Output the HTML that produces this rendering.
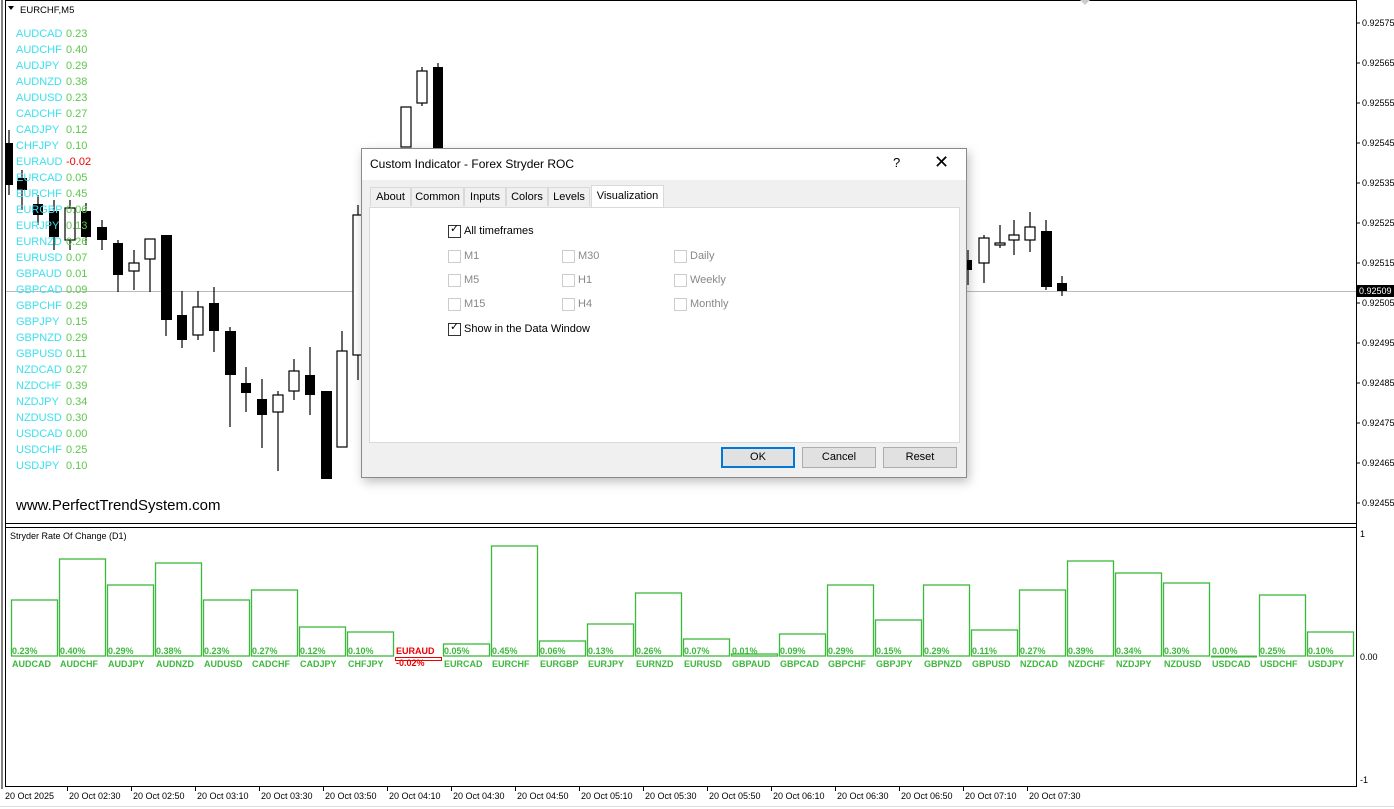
<!DOCTYPE html>
<html><head><meta charset="utf-8"><style>
body{margin:0;width:1394px;height:809px;background:#fff;overflow:hidden;position:relative;font-family:"Liberation Sans",sans-serif}
.lab{position:absolute;font-size:11px;line-height:16px}
.dlg{position:absolute;left:361px;top:148px;width:604px;height:328px;background:#f0f0f0;border:1px solid #8a8a8a;box-shadow:2px 4px 10px rgba(0,0,0,.25);font-size:11px;color:#000}
.tb{position:absolute;left:0;top:0;right:0;height:31px;background:#fff}
.tab{position:absolute;top:38px;height:19px;line-height:19px;border:1px solid #d9d9d9;border-bottom:none;background:#f0f0f0;text-align:center;font-size:11px;box-sizing:border-box}
.panel{position:absolute;left:7px;top:58px;width:589px;height:234px;background:#fff;border:1px solid #d9d9d9}
.cb{position:absolute;width:11px;height:11px;border:1px solid #333;background:#fff}
.cb.d{border-color:#ccc}
.ct{position:absolute;font-size:11px}
.btn{position:absolute;top:298px;height:19px;line-height:19px;width:72px;text-align:center;background:#e1e1e1;border:1px solid #adadad;font-size:11px}
</style></head><body>
<svg width="1394" height="809" style="position:absolute;left:0;top:0" font-family="Liberation Sans,sans-serif">
<g stroke="#000" fill="none">
<line x1="2" y1="0" x2="2" y2="789"/><line x1="5.5" y1="0" x2="5.5" y2="787"/>
<line x1="5" y1="0.5" x2="1356" y2="0.5"/>
<line x1="1356.5" y1="0" x2="1356.5" y2="787"/>
<line x1="5" y1="523.5" x2="1356" y2="523.5"/>
<line x1="5" y1="527.5" x2="1356" y2="527.5"/>
<line x1="5" y1="786.5" x2="1356" y2="786.5"/>
</g>
<line x1="6" y1="291.5" x2="1356" y2="291.5" stroke="#bbb"/>
<rect x="1357" y="285" width="37" height="12" fill="#000"/>
<text x="1359" y="294" font-size="9" fill="#fff">0.92509</text>
<g font-size="9" fill="#000">
<text x="1362" y="26">0.92575</text><text x="1362" y="66">0.92565</text><text x="1362" y="106">0.92555</text><text x="1362" y="146">0.92545</text><text x="1362" y="186">0.92535</text><text x="1362" y="226">0.92525</text><text x="1362" y="266">0.92515</text><text x="1362" y="306">0.92505</text><text x="1362" y="346">0.92495</text><text x="1362" y="386">0.92485</text><text x="1362" y="426">0.92475</text><text x="1362" y="466">0.92465</text><text x="1362" y="506">0.92455</text>
<text x="1360" y="537">1</text><text x="1360" y="660">0.00</text><text x="1360" y="783">-1</text>
</g>
<g stroke="#000" stroke-width="1">
<line x1="1356" y1="23" x2="1360" y2="23"/><line x1="1356" y1="63" x2="1360" y2="63"/><line x1="1356" y1="103" x2="1360" y2="103"/><line x1="1356" y1="143" x2="1360" y2="143"/><line x1="1356" y1="183" x2="1360" y2="183"/><line x1="1356" y1="223" x2="1360" y2="223"/><line x1="1356" y1="263" x2="1360" y2="263"/><line x1="1356" y1="303" x2="1360" y2="303"/><line x1="1356" y1="343" x2="1360" y2="343"/><line x1="1356" y1="383" x2="1360" y2="383"/><line x1="1356" y1="423" x2="1360" y2="423"/><line x1="1356" y1="463" x2="1360" y2="463"/><line x1="1356" y1="503" x2="1360" y2="503"/>
</g>
<path d="M8 6 L14 6 L11 10 Z" fill="#000"/>
<text x="20" y="13" font-size="9.5" fill="#000">EURCHF,M5</text>
<path d="M1080 0 L1090 0 L1085 5 Z" fill="#ccc"/>
<g stroke="#000" stroke-width="1.2">
<line x1="9" y1="130" x2="9" y2="195"/><line x1="22" y1="170" x2="22" y2="210"/><line x1="38" y1="195" x2="38" y2="225"/><line x1="54" y1="200" x2="54" y2="250"/><line x1="70" y1="200" x2="70" y2="250"/><line x1="86" y1="203" x2="86" y2="245"/><line x1="102" y1="220" x2="102" y2="250"/><line x1="118" y1="240" x2="118" y2="292"/><line x1="134" y1="250" x2="134" y2="290"/><line x1="150" y1="239" x2="150" y2="292"/>
<line x1="166" y1="235" x2="166" y2="336"/><line x1="182" y1="291" x2="182" y2="348"/><line x1="198" y1="291" x2="198" y2="340"/><line x1="214" y1="287" x2="214" y2="352"/><line x1="230" y1="327" x2="230" y2="427"/><line x1="246" y1="367" x2="246" y2="412"/><line x1="262" y1="379" x2="262" y2="448"/><line x1="278" y1="391" x2="278" y2="471"/><line x1="294" y1="359" x2="294" y2="400"/><line x1="310" y1="347" x2="310" y2="415"/><line x1="342" y1="331" x2="342" y2="447"/><line x1="358" y1="205" x2="358" y2="380"/><line x1="422" y1="67" x2="422" y2="106"/><line x1="438" y1="63" x2="438" y2="150"/>
<line x1="968" y1="250" x2="968" y2="285"/><line x1="984" y1="235" x2="984" y2="283"/><line x1="1000" y1="225" x2="1000" y2="248"/><line x1="1014" y1="220" x2="1014" y2="255"/><line x1="1030" y1="212" x2="1030" y2="252"/><line x1="1046" y1="220" x2="1046" y2="290"/><line x1="1062" y1="276" x2="1062" y2="296"/>
</g>
<g fill="#000">
<rect x="5" y="143" width="8" height="42"/><rect x="17" y="178" width="10" height="12"/><rect x="33" y="204" width="10" height="11"/><rect x="49" y="211" width="10" height="26"/><rect x="81" y="211" width="10" height="26"/><rect x="97" y="227" width="10" height="13"/><rect x="113" y="243" width="10" height="32"/><rect x="161" y="235" width="11" height="85"/><rect x="177" y="315" width="10" height="25"/><rect x="209" y="303" width="10" height="28"/><rect x="225" y="331" width="11" height="44"/><rect x="241" y="383" width="10" height="10"/><rect x="257" y="399" width="10" height="16"/><rect x="305" y="375" width="10" height="20"/><rect x="321" y="391" width="11" height="88"/><rect x="433" y="67" width="10" height="83"/>
<rect x="963" y="260" width="9" height="10"/><rect x="1041" y="231" width="11" height="56"/><rect x="1057" y="283" width="10" height="8"/>
</g>
<g fill="#fff" stroke="#000" stroke-width="1.2">
<rect x="65" y="208" width="10" height="32"/><rect x="129" y="263" width="10" height="8"/><rect x="145" y="239" width="10" height="20"/><rect x="193" y="307" width="10" height="28"/><rect x="273" y="395" width="10" height="17"/><rect x="289" y="371" width="10" height="20"/><rect x="337" y="351" width="10" height="96"/><rect x="353" y="215" width="10" height="140"/><rect x="401" y="107" width="10" height="40"/><rect x="417" y="71" width="10" height="32"/>
<rect x="979" y="238" width="10" height="25"/><rect x="995" y="243" width="10" height="2"/><rect x="1009" y="235" width="10" height="5"/><rect x="1025" y="227" width="10" height="13"/>
</g>
<text x="16" y="510" font-size="15" fill="#000">www.PerfectTrendSystem.com</text>
<text x="10" y="539" font-size="9" fill="#000">Stryder Rate Of Change (D1)</text>
<g fill="none" stroke="#3cb83c" stroke-width="1.3">
<rect x="11.5" y="600" width="46" height="56"/><rect x="59.5" y="559" width="46" height="97"/><rect x="107.5" y="585" width="46" height="71"/><rect x="155.5" y="563" width="46" height="93"/><rect x="203.5" y="600" width="46" height="56"/><rect x="251.5" y="590" width="46" height="66"/><rect x="299.5" y="627" width="46" height="29"/><rect x="347.5" y="632" width="46" height="24"/><rect x="443.5" y="644" width="46" height="12"/><rect x="491.5" y="546" width="46" height="110"/><rect x="539.5" y="641" width="46" height="15"/><rect x="587.5" y="624" width="46" height="32"/><rect x="635.5" y="593" width="46" height="63"/><rect x="683.5" y="639" width="46" height="17"/><rect x="731.5" y="654" width="46" height="2"/><rect x="779.5" y="634" width="46" height="22"/><rect x="827.5" y="585" width="46" height="71"/><rect x="875.5" y="620" width="46" height="36"/><rect x="923.5" y="585" width="46" height="71"/><rect x="971.5" y="630" width="46" height="26"/><rect x="1019.5" y="590" width="46" height="66"/><rect x="1067.5" y="561" width="46" height="95"/><rect x="1115.5" y="573" width="46" height="83"/><rect x="1163.5" y="583" width="46" height="73"/><rect x="1259.5" y="595" width="46" height="61"/><rect x="1307.5" y="632" width="46" height="24"/>
</g>
<line x1="1211" y1="656.5" x2="1257" y2="656.5" stroke="#3cb83c" stroke-width="2"/>
<rect x="395.5" y="657.5" width="46" height="3" fill="none" stroke="#e00"/>
<g font-size="9" font-weight="bold" fill="#3cb83c">
<text x="12" y="654">0.23%</text><text x="60" y="654">0.40%</text><text x="108" y="654">0.29%</text><text x="156" y="654">0.38%</text><text x="204" y="654">0.23%</text><text x="252" y="654">0.27%</text><text x="300" y="654">0.12%</text><text x="348" y="654">0.10%</text><text x="444" y="654">0.05%</text><text x="492" y="654">0.45%</text><text x="540" y="654">0.06%</text><text x="588" y="654">0.13%</text><text x="636" y="654">0.26%</text><text x="684" y="654">0.07%</text><text x="732" y="654">0.01%</text><text x="780" y="654">0.09%</text><text x="828" y="654">0.29%</text><text x="876" y="654">0.15%</text><text x="924" y="654">0.29%</text><text x="972" y="654">0.11%</text><text x="1020" y="654">0.27%</text><text x="1068" y="654">0.39%</text><text x="1116" y="654">0.34%</text><text x="1164" y="654">0.30%</text><text x="1212" y="654">0.00%</text><text x="1260" y="654">0.25%</text><text x="1308" y="654">0.10%</text>
<text x="12" y="667">AUDCAD</text><text x="60" y="667">AUDCHF</text><text x="108" y="667">AUDJPY</text><text x="156" y="667">AUDNZD</text><text x="204" y="667">AUDUSD</text><text x="252" y="667">CADCHF</text><text x="300" y="667">CADJPY</text><text x="348" y="667">CHFJPY</text><text x="444" y="667">EURCAD</text><text x="492" y="667">EURCHF</text><text x="540" y="667">EURGBP</text><text x="588" y="667">EURJPY</text><text x="636" y="667">EURNZD</text><text x="684" y="667">EURUSD</text><text x="732" y="667">GBPAUD</text><text x="780" y="667">GBPCAD</text><text x="828" y="667">GBPCHF</text><text x="876" y="667">GBPJPY</text><text x="924" y="667">GBPNZD</text><text x="972" y="667">GBPUSD</text><text x="1020" y="667">NZDCAD</text><text x="1068" y="667">NZDCHF</text><text x="1116" y="667">NZDJPY</text><text x="1164" y="667">NZDUSD</text><text x="1212" y="667">USDCAD</text><text x="1260" y="667">USDCHF</text><text x="1308" y="667">USDJPY</text>
</g>
<g font-size="9" font-weight="bold" fill="#e00"><text x="396" y="654">EURAUD</text><text x="396" y="666">-0.02%</text></g>
<g font-size="9" fill="#000">
<text x="5" y="799">20 Oct 2025</text><text x="69" y="799">20 Oct 02:30</text><text x="133" y="799">20 Oct 02:50</text><text x="197" y="799">20 Oct 03:10</text><text x="261" y="799">20 Oct 03:30</text><text x="325" y="799">20 Oct 03:50</text><text x="389" y="799">20 Oct 04:10</text><text x="453" y="799">20 Oct 04:30</text><text x="517" y="799">20 Oct 04:50</text><text x="581" y="799">20 Oct 05:10</text><text x="645" y="799">20 Oct 05:30</text><text x="709" y="799">20 Oct 05:50</text><text x="773" y="799">20 Oct 06:10</text><text x="837" y="799">20 Oct 06:30</text><text x="901" y="799">20 Oct 06:50</text><text x="965" y="799">20 Oct 07:10</text><text x="1029" y="799">20 Oct 07:30</text>
</g>
<g stroke="#000"><line x1="67.5" y1="786" x2="67.5" y2="791"/><line x1="131.5" y1="786" x2="131.5" y2="791"/><line x1="195.5" y1="786" x2="195.5" y2="791"/><line x1="259.5" y1="786" x2="259.5" y2="791"/><line x1="323.5" y1="786" x2="323.5" y2="791"/><line x1="387.5" y1="786" x2="387.5" y2="791"/><line x1="451.5" y1="786" x2="451.5" y2="791"/><line x1="515.5" y1="786" x2="515.5" y2="791"/><line x1="579.5" y1="786" x2="579.5" y2="791"/><line x1="643.5" y1="786" x2="643.5" y2="791"/><line x1="707.5" y1="786" x2="707.5" y2="791"/><line x1="771.5" y1="786" x2="771.5" y2="791"/><line x1="835.5" y1="786" x2="835.5" y2="791"/><line x1="899.5" y1="786" x2="899.5" y2="791"/><line x1="963.5" y1="786" x2="963.5" y2="791"/><line x1="1027.5" y1="786" x2="1027.5" y2="791"/></g>
<line x1="0" y1="806.5" x2="1394" y2="806.5" stroke="#ddd"/>
</svg>
<div class="lab" style="left:16px;top:26px;color:#3ce0ee">AUDCAD<br>AUDCHF<br>AUDJPY<br>AUDNZD<br>AUDUSD<br>CADCHF<br>CADJPY<br>CHFJPY<br>EURAUD<br>EURCAD<br>EURCHF<br>EURGBP<br>EURJPY<br>EURNZD<br>EURUSD<br>GBPAUD<br>GBPCAD<br>GBPCHF<br>GBPJPY<br>GBPNZD<br>GBPUSD<br>NZDCAD<br>NZDCHF<br>NZDJPY<br>NZDUSD<br>USDCAD<br>USDCHF<br>USDJPY</div>
<div class="lab" style="left:66px;top:26px;color:#5cc84a">0.23<br>0.40<br>0.29<br>0.38<br>0.23<br>0.27<br>0.12<br>0.10<br><span style="color:#e00">-0.02</span><br>0.05<br>0.45<br>0.06<br>0.13<br>0.26<br>0.07<br>0.01<br>0.09<br>0.29<br>0.15<br>0.29<br>0.11<br>0.27<br>0.39<br>0.34<br>0.30<br>0.00<br>0.25<br>0.10</div>
<div class="dlg">
<div class="tb"><span style="position:absolute;left:8px;top:8px;font-size:12px">Custom Indicator - Forex Stryder ROC</span><span style="position:absolute;left:531px;top:6px;font-size:13px">?</span><span style="position:absolute;left:572px;top:3px;font-size:18px;font-weight:300">✕</span></div>
<div class="tab" style="left:8px;width:41px">About</div>
<div class="tab" style="left:49px;width:53px">Common</div>
<div class="tab" style="left:102px;width:42px">Inputs</div>
<div class="tab" style="left:144px;width:42px">Colors</div>
<div class="tab" style="left:186px;width:42px">Levels</div>
<div class="tab" style="left:229px;top:36px;height:22px;line-height:20px;width:73px;background:#fff;z-index:2">Visualization</div>
<div class="panel">
<div class="cb" style="left:78px;top:17px"></div><span class="ct" style="left:80px;top:14px">✓</span><span class="ct" style="left:94px;top:17px">All timeframes</span>
<div class="cb d" style="left:78px;top:42px"></div><span class="ct" style="left:94px;top:42px;color:#888">M1</span>
<div class="cb d" style="left:78px;top:66px"></div><span class="ct" style="left:94px;top:66px;color:#888">M5</span>
<div class="cb d" style="left:78px;top:90px"></div><span class="ct" style="left:94px;top:90px;color:#888">M15</span>
<div class="cb d" style="left:192px;top:42px"></div><span class="ct" style="left:208px;top:42px;color:#888">M30</span>
<div class="cb d" style="left:192px;top:66px"></div><span class="ct" style="left:208px;top:66px;color:#888">H1</span>
<div class="cb d" style="left:192px;top:90px"></div><span class="ct" style="left:208px;top:90px;color:#888">H4</span>
<div class="cb d" style="left:304px;top:42px"></div><span class="ct" style="left:320px;top:42px;color:#888">Daily</span>
<div class="cb d" style="left:304px;top:66px"></div><span class="ct" style="left:320px;top:66px;color:#888">Weekly</span>
<div class="cb d" style="left:304px;top:90px"></div><span class="ct" style="left:320px;top:90px;color:#888">Monthly</span>
<div class="cb" style="left:78px;top:115px"></div><span class="ct" style="left:80px;top:112px">✓</span><span class="ct" style="left:94px;top:115px">Show in the Data Window</span>
</div>
<div class="btn" style="left:359px;border:2px solid #0078d7;height:17px;line-height:17px;width:70px">OK</div>
<div class="btn" style="left:440px">Cancel</div>
<div class="btn" style="left:521px">Reset</div>
</div>
</body></html>
